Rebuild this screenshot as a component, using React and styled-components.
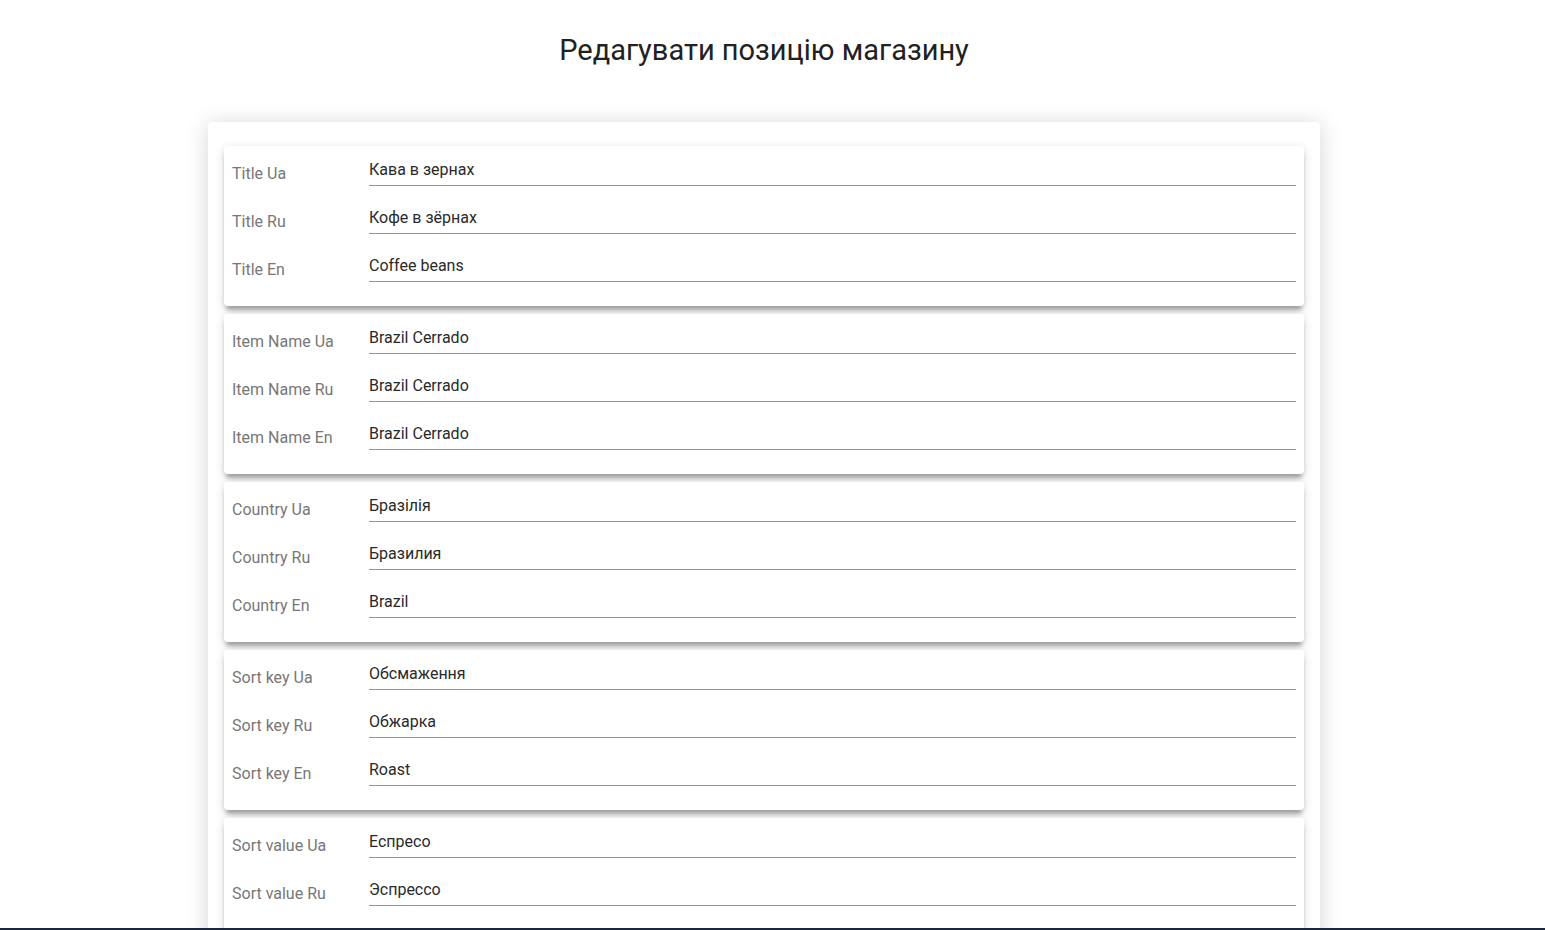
import React from "react";
import styled, { createGlobalStyle } from "styled-components";

const GlobalStyle = createGlobalStyle`
  html, body {
    margin: 0;
    padding: 0;
    background: #ffffff;
    font-family: Roboto, "Noto Sans", "Liberation Sans", sans-serif;
  }
  * { box-sizing: border-box; }
`;

const Page = styled.div`
  width: 1528px;
  padding: 33px 0 40px;
`;

const Heading = styled.h1`
  margin: 0 0 55px;
  text-align: center;
  font-size: 29px;
  line-height: 34px;
  font-weight: 400;
  color: #212121;
`;

const Sheet = styled.div`
  width: 1112px;
  margin: 0 auto;
  padding: 24px 16px;
  background: #fff;
  border-radius: 4px;
  box-shadow: 0 2px 22px rgba(0, 0, 0, 0.17);
  display: flex;
  flex-direction: column;
  gap: 8px;
`;

const Card = styled.section`
  background: #fff;
  border-radius: 4px;
  padding: 8px;
  box-shadow: 0 3px 10px rgba(0, 0, 0, 0.18), 0 6px 4px -2px rgba(0, 0, 0, 0.28);
`;

const Row = styled.label`
  display: grid;
  grid-template-columns: 137px 1fr;
  height: 48px;
`;

const Label = styled.span`
  padding-top: 8px;
  font-size: 16px;
  line-height: 24px;
  color: #777777;
`;

const Field = styled.input`
  height: 32px;
  width: 100%;
  padding: 4px 0 5px;
  margin: 0;
  border: none;
  border-bottom: 1px solid #949494;
  outline: none;
  background: transparent;
  font-family: inherit;
  font-size: 16px;
  line-height: 22px;
  color: #2a2a2a;
`;

const BottomBar = styled.div`
  position: fixed;
  left: 0;
  right: 0;
  bottom: 0;
  height: 2px;
  background: #1d2640;
`;

const groups = [
  [
    ["Title Ua", "Кава в зернах"],
    ["Title Ru", "Кофе в зёрнах"],
    ["Title En", "Coffee beans"],
  ],
  [
    ["Item Name Ua", "Brazil Cerrado"],
    ["Item Name Ru", "Brazil Cerrado"],
    ["Item Name En", "Brazil Cerrado"],
  ],
  [
    ["Country Ua", "Бразілія"],
    ["Country Ru", "Бразилия"],
    ["Country En", "Brazil"],
  ],
  [
    ["Sort key Ua", "Обсмаження"],
    ["Sort key Ru", "Обжарка"],
    ["Sort key En", "Roast"],
  ],
  [
    ["Sort value Ua", "Еспресо"],
    ["Sort value Ru", "Эспрессо"],
    ["Sort value En", "Espresso"],
  ],
];

export default function App() {
  return (
    <>
      <GlobalStyle />
      <Page>
        <Heading>Редагувати позицію магазину</Heading>
        <Sheet>
          {groups.map((group, gi) => (
            <Card key={gi}>
              {group.map(([label, value]) => (
                <Row key={label}>
                  <Label>{label}</Label>
                  <Field defaultValue={value} />
                </Row>
              ))}
            </Card>
          ))}
        </Sheet>
      </Page>
      <BottomBar />
    </>
  );
}
